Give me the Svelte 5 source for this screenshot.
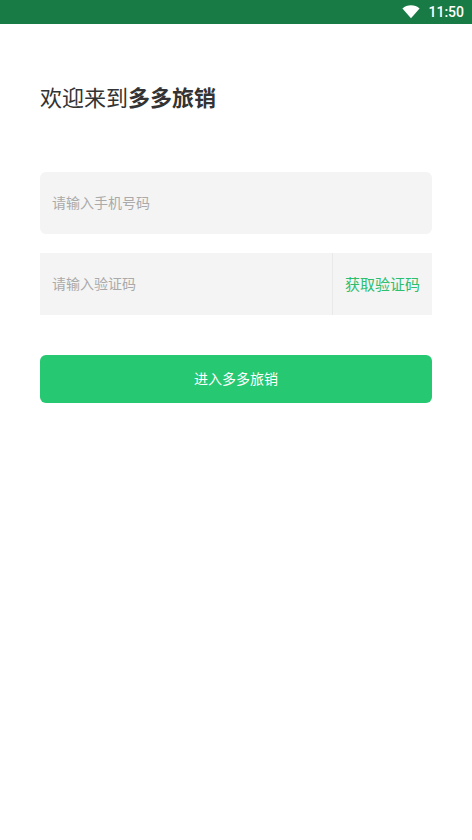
<script>
	let phone = $state('');
	let code = $state('');

	function submit(e) {
		e.preventDefault();
	}
</script>

<div class="page">
	<header class="status">
		<svg width="18" height="14" viewBox="0 0 18 14" aria-hidden="true">
			<path d="M0.4 3.4C2.8 1.3 5.8 0.3 9 0.3s6.2 1 8.6 3.1L9 13.2z" fill="#fff" />
		</svg>
		<span>11:50</span>
	</header>

	<main>
		<h1>欢迎来到<strong>多多旅销</strong></h1>

		<form onsubmit={submit}>
			<input class="phone" type="tel" placeholder="请输入手机号码" aria-label="请输入手机号码" bind:value={phone} />

			<div class="code">
				<input type="text" placeholder="请输入验证码" aria-label="请输入验证码" bind:value={code} />
				<button type="button">获取验证码</button>
			</div>

			<button class="enter" type="submit">进入多多旅销</button>
		</form>
	</main>
</div>

<style>
	:global(body) {
		background: #fff;
	}

	.page,
	input,
	button {
		font-family: 'Noto Sans CJK SC', sans-serif;
	}

	.status {
		height: 24px;
		padding: 0 8px;
		display: flex;
		justify-content: flex-end;
		align-items: center;
		gap: 8px;
		background: #187b45;
		color: #fff;
		font-family: Roboto, sans-serif;
		font-size: 14px;
		font-weight: 500;
		line-height: 26px;
	}

	main {
		padding: 54px 40px;
	}

	h1 {
		margin: 0 0 58px;
		color: #333;
		font-size: 22px;
		font-weight: 400;
		line-height: 36px;
	}

	h1 strong {
		font-weight: 700;
	}

	form {
		display: flex;
		flex-direction: column;
	}

	input {
		box-sizing: border-box;
		width: 100%;
		min-width: 0;
		height: 62px;
		padding: 0 12px 2px;
		border: 0;
		outline: 0;
		background: #f4f4f4;
		color: #333;
		font-size: 14px;
	}

	input::placeholder {
		color: #aaa;
		opacity: 1;
	}

	.phone {
		border-radius: 6px;
	}

	.code {
		margin: 19px 0 40px;
		display: flex;
	}

	button {
		padding: 0 12px 2px;
		border: 0;
		cursor: pointer;
	}

	.code button {
		flex: none;
		border-left: 1px solid #e9e9e9;
		background: #f4f4f4;
		color: #2dbe6e;
		font-size: 15px;
	}

	.enter {
		height: 48px;
		border-radius: 6px;
		background: #26c872;
		color: #fff;
		font-size: 14px;
	}
</style>
